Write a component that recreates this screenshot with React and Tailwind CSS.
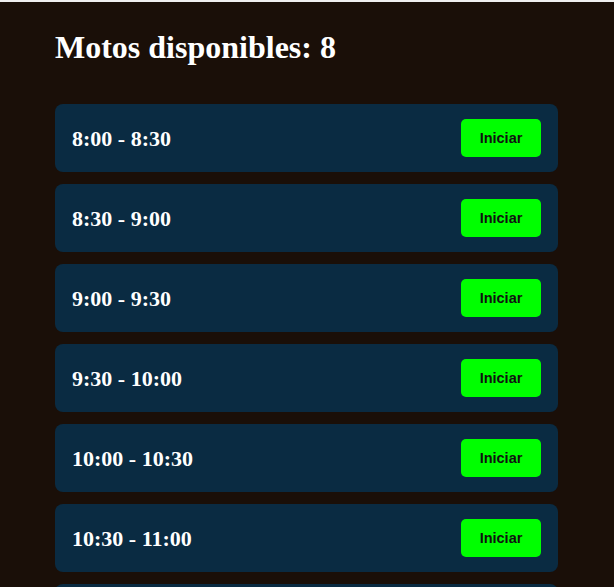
const slots = [
  "8:00 - 8:30",
  "8:30 - 9:00",
  "9:00 - 9:30",
  "9:30 - 10:00",
  "10:00 - 10:30",
  "10:30 - 11:00",
  "11:00 - 11:30",
  "11:30 - 12:00",
];

function Slot({ label }) {
  return (
    <div className="w-[503px] h-[68px] mb-3 rounded-lg bg-[#0a2b42] flex items-center justify-between pl-[17px] pr-[17px]">
      <span className="text-white text-[22px] font-bold font-['Liberation_Serif',serif]">{label}</span>
      <button className="w-[80px] h-[38px] rounded-[5px] bg-[#00ff00] text-[#111] text-[14.5px] font-bold font-['Liberation_Sans',sans-serif] pt-px">
        Iniciar
      </button>
    </div>
  );
}

export default function App() {
  return (
    <div className="min-h-screen bg-[#1a0f08] border-t-2 border-[#efefef] pl-[55px] pt-[27px]">
      <h1 className="text-white text-[32px] leading-[36px] font-bold font-['Liberation_Serif',serif] mb-[39px]">
        Motos disponibles: 8
      </h1>
      {slots.map((s) => (
        <Slot key={s} label={s} />
      ))}
    </div>
  );
}
